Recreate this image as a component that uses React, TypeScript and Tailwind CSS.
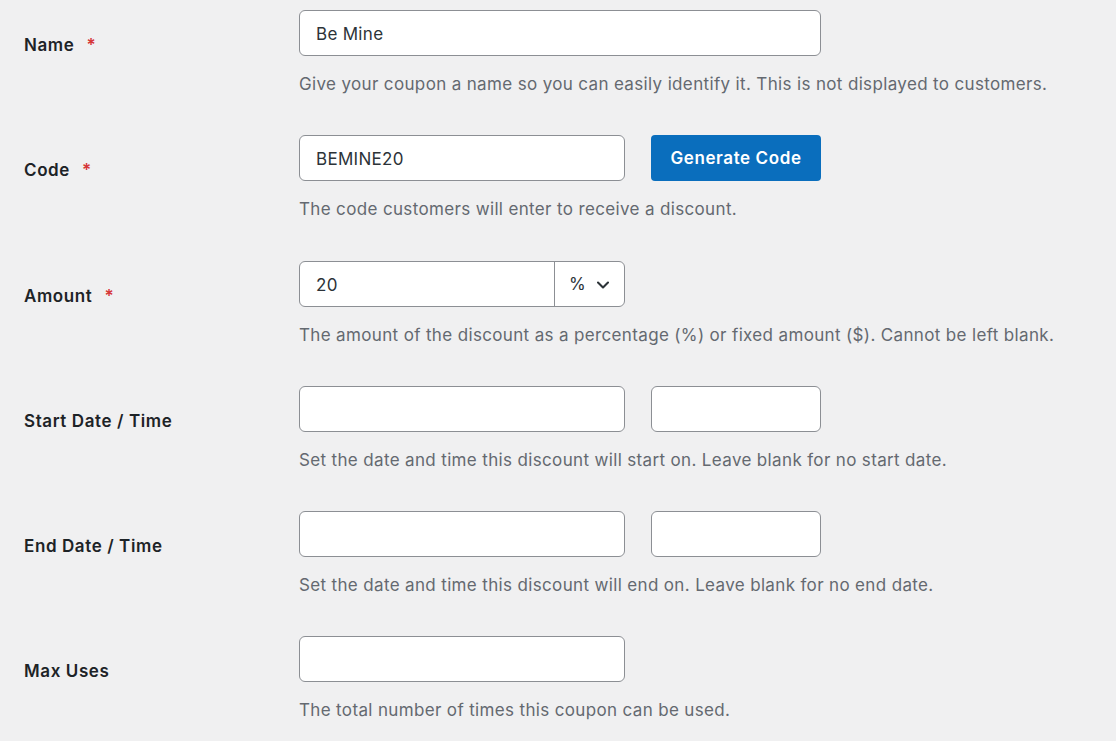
import { ChevronDown } from 'lucide-react'

const font = { fontFamily: 'Inter, "Liberation Sans", sans-serif' }

function Label({ text, required }: { text: string; required?: boolean }) {
  return (
    <div className="w-[299px] shrink-0 pl-6 pt-[33px]">
      <span className="text-[17px] font-semibold leading-6 tracking-[0.6px] text-[#1d2327]">
        {text}
        {required && <span className="ml-[12px] text-[#d63638]">*</span>}
      </span>
    </div>
  )
}

function Input({ value = '', width }: { value?: string; width: string }) {
  return (
    <input
      type="text"
      defaultValue={value}
      className={`${width} h-[46px] rounded-[6px] border border-[#8c8f94] bg-white px-4 pt-px text-[17px] tracking-[0.3px] text-[#2c3338] outline-none`}
    />
  )
}

function Row({ label, required, desc, tall, children }: { label: string; required?: boolean; desc: string; tall?: boolean; children: React.ReactNode }) {
  return (
    <div className={`flex ${tall ? 'h-[126px]' : 'h-[125px]'}`}>
      <Label text={label} required={required} />
      <div className="flex flex-col pt-[10px]">
        <div className="flex gap-[26px]">{children}</div>
        <p className="mt-[16px] text-[17px] leading-6 tracking-[0.35px] text-[#646970]">{desc}</p>
      </div>
    </div>
  )
}

export default function App() {
  return (
    <div className="min-h-screen bg-[#f0f0f1]" style={font}>
      <Row label="Name" required desc="Give your coupon a name so you can easily identify it. This is not displayed to customers.">
        <Input value="Be Mine" width="w-[522px]" />
      </Row>
      <Row label="Code" required tall desc="The code customers will enter to receive a discount.">
        <Input value="BEMINE20" width="w-[326px]" />
        <button
          type="button"
          className="h-[46px] w-[170px] rounded-[4px] bg-[#0a6ebd] pt-px text-[17px] font-semibold tracking-[0.6px] text-white"
        >
          Generate Code
        </button>
      </Row>
      <Row label="Amount" required desc="The amount of the discount as a percentage (%) or fixed amount ($). Cannot be left blank.">
        <div className="flex h-[46px] w-[326px] overflow-hidden rounded-[6px] border border-[#8c8f94] bg-white">
          <input
            type="text"
            defaultValue="20"
            className="h-full w-[254px] px-4 pt-px text-[17px] tracking-[0.3px] text-[#2c3338] outline-none"
          />
          <div className="flex flex-1 items-center justify-between border-l border-[#8c8f94] pl-[14px] pr-[11px] pt-px text-[17px] text-[#2c3338]">
            <span>%</span>
            <ChevronDown size={20} strokeWidth={2.5} />
          </div>
        </div>
      </Row>
      <Row label="Start Date / Time" desc="Set the date and time this discount will start on. Leave blank for no start date.">
        <Input width="w-[326px]" />
        <Input width="w-[170px]" />
      </Row>
      <Row label="End Date / Time" desc="Set the date and time this discount will end on. Leave blank for no end date.">
        <Input width="w-[326px]" />
        <Input width="w-[170px]" />
      </Row>
      <Row label="Max Uses" desc="The total number of times this coupon can be used.">
        <Input width="w-[326px]" />
      </Row>
    </div>
  )
}
